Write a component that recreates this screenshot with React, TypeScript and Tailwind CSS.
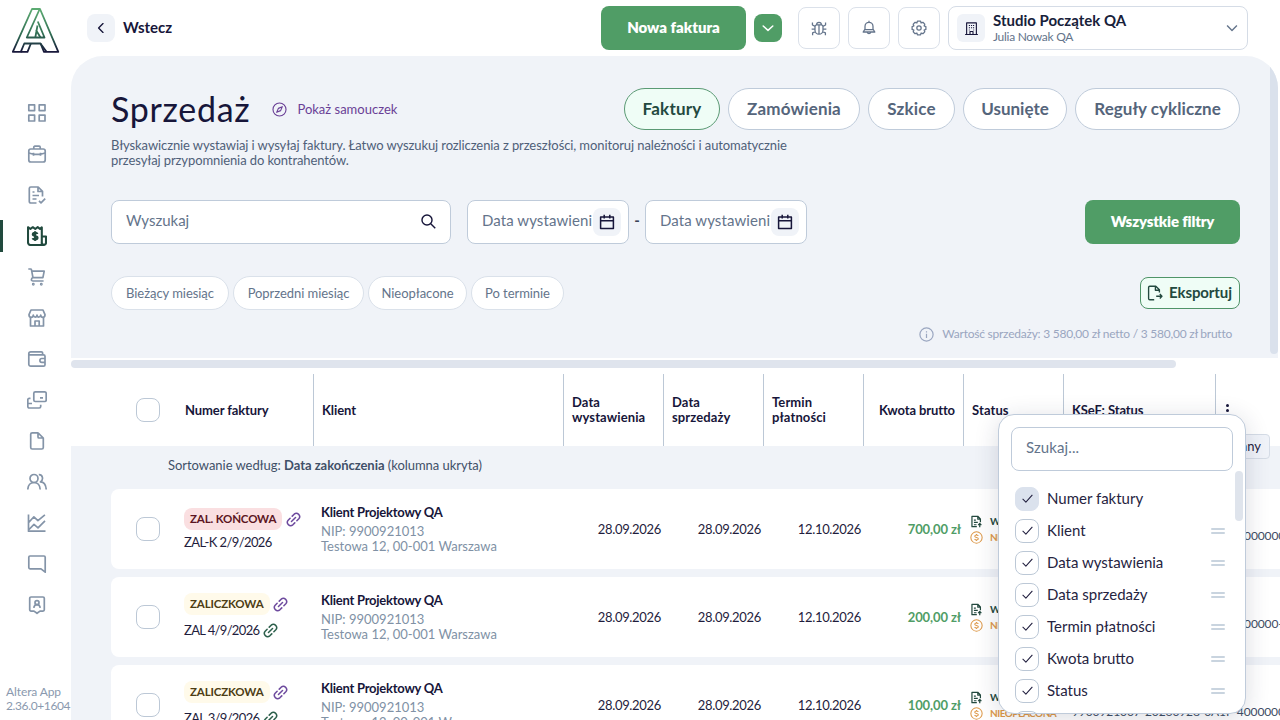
import type { ReactNode } from "react";

const navIcons: { id: string; active?: boolean; icon: ReactNode }[] = [
  {
    id: "dashboard",
    icon: <path d="M1.8 1.8h5.8v5.8H1.8zM12.2 1.8H18v5.8h-5.8zM1.8 12.2h5.8V18H1.8zM12.2 12.2H18V18h-5.8z" />,
  },
  {
    id: "company",
    icon: (
      <>
        <rect x="1.8" y="5" width="16.4" height="13" rx="2" />
        <path d="M6.8 5V3.2a1 1 0 0 1 1-1h4.4a1 1 0 0 1 1 1V5M1.8 9l4.7 1.3h7L18.2 9M6.5 8.8v3M13.5 8.8v3" />
      </>
    ),
  },
  {
    id: "documents",
    icon: (
      <>
        <path d="M9.5 18H3.8a1.5 1.5 0 0 1-1.5-1.5v-13A1.5 1.5 0 0 1 3.8 2h7.4l4.3 4.3v5.2M11 2v4.5h4.5M5.5 7h2M5.5 10.5h6.5M5.5 14h4" />
        <path d="m12 15.8 2 2 4.2-4.2" />
      </>
    ),
  },
  {
    id: "sales",
    active: true,
    icon: (
      <>
        <path d="M1 1.2 3.4 3l2.4-1.8L8.3 3l2.4-1.8L13 3l1.8-1.6V17a2 2 0 0 0 2 2H3.5A2.5 2.5 0 0 1 1 16.5z" />
        <path d="M14.8 10.5H19v6.2a2.1 2.1 0 0 1-4.2 0" />
        <path d="M10.4 8c-.2-.8-1-1.3-2.3-1.3-1.4 0-2.3.6-2.3 1.6 0 2.4 4.7 1 4.7 3.5 0 1-1 1.7-2.4 1.7-1.3 0-2.2-.5-2.5-1.4M8.1 5.2V15" />
      </>
    ),
  },
  {
    id: "purchases",
    icon: (
      <>
        <path d="M1.3 2h2.2a1 1 0 0 1 1 .8L6 10.8M5 4.2h12.2l-1.3 6.5H6c-1.8.3-2.4 3.3 0 3.3h10.6" />
        <circle cx="6.3" cy="17.2" r=".6" />
        <circle cx="14.3" cy="17.2" r=".6" />
      </>
    ),
  },
  {
    id: "shop",
    icon: (
      <path d="M3.5 9.5V18h13V9.5M8 18v-5h4.2v5M4 2h12l2 4.7c0 3.4-4 3.4-4.3.4-.4 2.7-3.4 2.7-3.7 0-.3 2.7-3.3 2.7-3.7 0C6 10.1 2 10.1 2 6.7z" />
    ),
  },
  {
    id: "wallet",
    icon: (
      <>
        <path d="M15.6 5.8V4a1.2 1.2 0 0 0-1.2-1.2H3.8a2 2 0 0 0-2 2v10.4a2 2 0 0 0 2 2h12.7a1.5 1.5 0 0 0 1.5-1.5V7.3a1.5 1.5 0 0 0-1.5-1.5H2.2" />
        <path d="M18 9.5h-3.2a1.9 1.9 0 0 0 0 3.8H18" />
      </>
    ),
  },
  {
    id: "payments",
    icon: (
      <>
        <rect x="6.8" y="1.8" width="12.4" height="9.7" rx="1.5" />
        <path d="M13 7.8h3M3.5 8.3H2.3A1.5 1.5 0 0 0 .8 9.800v6.7A1.5 1.5 0 0 0 2.3 18h9.9a1.5 1.5 0 0 0 1.5-1.5v-1.8M.8 13.5H5" />
      </>
    ),
  },
  {
    id: "files",
    icon: <path d="M11 1.8H5.2a1.5 1.5 0 0 0-1.5 1.5v13.2A1.5 1.5 0 0 0 5.2 18h9.6a1.5 1.5 0 0 0 1.5-1.5V7L11 1.8V6a1 1 0 0 0 1 1h4.3" />,
  },
  {
    id: "contacts",
    icon: (
      <>
        <circle cx="7" cy="6.5" r="4" />
        <path d="M.8 17.5c.2-4.2 2.700-7 6.200-7s6 2.8 6.200 7M11.8 2.6c3.7-.2 5.2 4.8 1.7 7.3 3.2 0 5.4 3 5.7 7.6" />
      </>
    ),
  },
  {
    id: "reports",
    icon: <path d="M1.5 1.5v16.7h17M1.7 9.5l5.2-5.7 4 3.8 7-5.8M2 16.5l5-5.2 4 3.5 7-7" />,
  },
  {
    id: "messages",
    icon: <path d="M3 2h14a1.2 1.2 0 0 1 1.2 1.2v15L14 14.8H3a1.2 1.2 0 0 1-1.2-1.2V3.2A1.2 1.2 0 0 1 3 2z" />,
  },
  {
    id: "support",
    icon: (
      <>
        <path d="M4 2h12a1.3 1.3 0 0 1 1.3 1.3v11.5A1.3 1.3 0 0 1 16 16.1h-3L10 18.3l-3-2.2H4a1.3 1.3 0 0 1-1.3-1.3V3.3A1.3 1.3 0 0 1 4 2z" />
        <circle cx="10" cy="7.7" r="2" />
        <path d="M6.8 12.8c.3-2 1.5-3.1 3.2-3.1s2.9 1.1 3.2 3.1" />
      </>
    ),
  },
];

const tabs = [
  { label: "Faktury", cls: "w-24 bg-[#effdf6] border-[#5a9a74] text-[#23493f] tracking-[0.2px]" },
  { label: "Zamówienia", cls: "w-[132px] bg-white border-[#bfcbda] text-[#55657b] tracking-[0.15px]" },
  { label: "Szkice", cls: "w-[87px] bg-white border-[#bfcbda] text-[#55657b] tracking-[0.15px]" },
  { label: "Usunięte", cls: "w-[104px] bg-white border-[#bfcbda] text-[#55657b]" },
  { label: "Reguły cykliczne", cls: "w-[165px] bg-white border-[#bfcbda] text-[#55657b] tracking-[0.05px]" },
];

const quickFilters = [
  { label: "Bieżący miesiąc", width: "w-[118px]" },
  { label: "Poprzedni miesiąc", width: "w-[131px]" },
  { label: "Nieopłacone", width: "w-[99px]" },
  { label: "Po terminie", width: "w-[93px]" },
];

const invoices = [
  { kind: "ZAL. KOŃCOWA", final: true, number: "ZAL-K 2/9/2026", amount: "700,00 zł", ksef: "9900921007-20260928-0A12-0000000" },
  { kind: "ZALICZKOWA", final: false, number: "ZAL 4/9/2026", amount: "200,00 zł", ksef: "9900921007-20260928-0A12-000000-" },
  { kind: "ZALICZKOWA", final: false, number: "ZAL 3/9/2026", amount: "100,00 zł", ksef: "9900921007-20260928-0A1F-4000000" },
];

const columns = ["Numer faktury", "Klient", "Data wystawienia", "Data sprzedaży", "Termin płatności", "Kwota brutto", "Status", "KSeF: Status"];

const Svg = ({ size = 20, sw = 1.5, className = "", children }: { size?: number; sw?: number; className?: string; children: ReactNode }) => (
  <svg width={size} height={size} viewBox="0 0 20 20" fill="none" stroke="currentColor" strokeWidth={sw} strokeLinejoin="round" className={`shrink-0 ${className}`}>
    {children}
  </svg>
);

const LinkIcon = ({ className = "" }) => (
  <Svg size={15} sw={2} className={className}>
    <path d="m7.3 12.700 5.400-5.400M8.3 5.5l2.6-2.6a4.4 4.4 0 0 1 6.2 6.2l-2.6 2.6M5.5 8.3l-2.6 2.6a4.4 4.4 0 0 0 6.2 6.2l2.6-2.6" strokeLinecap="round" />
  </Svg>
);

const CalendarButton = () => (
  <span className="flex size-7 items-center justify-center rounded-lg bg-[#f0f3f8]">
    <Svg size={16} sw={1.9} className="text-[#17163a]">
      <path d="M2 3.8h16v14.4H2zM2 8.5h16M6.5 1v4.5M13.5 1v4.5" />
    </Svg>
  </span>
);

const DateInput = () => (
  <div className="flex h-11 w-[162px] items-center rounded-lg border border-[#bfcbda] bg-white pl-3.5">
    <span className="-mt-[3px] w-[111px] overflow-hidden whitespace-nowrap text-[15px] tracking-[0.08px] text-[#64748b]">Data wystawieni</span>
    <CalendarButton />
  </div>
);

const Box = ({ className = "" }) => <span className={`size-6 shrink-0 rounded-lg border border-[#bcc8d6] ${className}`} />;

const Sidebar = () => (
  <aside className="flex h-[720px] w-[71px] shrink-0 flex-col bg-white">
    <svg width="71" height="60" viewBox="0 0 71 60" fill="none" stroke="url(#logo)" strokeWidth="1.8" strokeLinejoin="round">
      <defs>
        <linearGradient id="logo" x1="0" y1="9" x2="0" y2="52" gradientUnits="userSpaceOnUse">
          <stop offset="0" stopColor="#5cab72" />
          <stop offset=".6" stopColor="#2f6b52" />
          <stop offset="1" stopColor="#17163a" />
        </linearGradient>
      </defs>
      <path d="M12.8 51.8 32 9h8l18.3 42.8H44l-3.5-8.3H24.3L20.8 51.8z" />
      <path d="M39.5 9.5 26.8 37.5h17.7L37.8 21.500M20.8 51.8h6.7l3.4-8.3" />
      <path d="m37.5 25.500-2.200 12M36 30l4.500 7.500M40.5 43.5l6 8.300" />
    </svg>
    <nav className="mt-8 flex flex-col">
      {navIcons.map((n) => (
        <div key={n.id} className={`flex h-[41px] items-center ${n.active ? "text-[#214a3e]" : "text-[#8494a8]"}`}>
          <span className={`h-8 w-[3px] ${n.active ? "bg-[#214a3e]" : ""}`} />
          <Svg className="ml-6" sw={n.active ? 2.1 : 1.7}>{n.icon}</Svg>
        </div>
      ))}
    </nav>
    <div className="mt-auto pb-[7px] pl-1.5 text-[12px] leading-[14px] text-[#8a99ae]">
      <p className="tracking-[-0.1px]">Altera App</p>
      <p className="tracking-[-0.38px]">2.36.0+1604</p>
    </div>
  </aside>
);

const TopBar = () => (
  <header className="flex h-14 items-center pr-8 pl-4">
    <span className="flex size-7 items-center justify-center rounded-lg bg-[#f0f3f8] text-[#17163a]">
      <Svg size={16} sw={1.7}><path d="m12.5 4.5-5.5 5.5 5.5 5.5" strokeLinecap="round" /></Svg>
    </span>
    <span className="-mt-px ml-2 text-[15px] font-bold text-[#17163a]">Wstecz</span>
    <button className="ml-auto h-11 w-[145px] rounded-lg bg-[#509d66] pb-0.5 text-[15px] font-extrabold text-white">Nowa faktura</button>
    <button className="ml-2 flex size-7 items-center justify-center rounded-lg bg-[#509d66] text-white">
      <Svg size={16} sw={1.9}><path d="m4 7.5 6 5.5 6-5.5" strokeLinecap="round" /></Svg>
    </button>
    <div className="ml-4 flex gap-2 text-[#64748b]">
      <span className="flex size-[42px] items-center justify-center rounded-lg border border-[#dbe1ea]">
        <Svg size={16} sw={1.6}>
          <path d="M5 8.5C5 6.800 6 6 7.5 6h5c1.5 0 2.5.8 2.5 2.5v4.2a5 5 0 0 1-10 0zM10 6v11.5M7 6a3 3 0 0 1 6 0M5 11.500H.8M15 11.5h4.2M5.2 8 1.8 6.2V3M14.8 8l3.4-1.8V3M5.5 14.5 2 16v3M14.5 14.5 18 16v3" />
        </Svg>
      </span>
      <span className="flex size-[42px] items-center justify-center rounded-lg border border-[#dbe1ea]">
        <Svg size={16} sw={1.6}>
          <path d="M10 1v2M5 8a5 5 0 0 1 10 0v3.5l2.3 3.5H2.7L5 11.5zM4.5 12h11M7.8 15.5a2.3 2.3 0 0 0 4.4 0" />
        </Svg>
      </span>
      <span className="flex size-[42px] items-center justify-center rounded-lg border border-[#dbe1ea]">
        <Svg size={16} sw={1.6}>
          <circle cx="10" cy="10" r="2.7" />
          <path d="M8 1.5h4l.6 2.2 2.3-.8 2.3 2.3-.8 2.2 2.2.8v3.6l-2.2.8.8 2.2-2.3 2.3-2.3-.8-.6 2.2H8l-.6-2.2-2.3.8-2.3-2.3.8-2.2-2.2-.8V8.2l2.2-.8-.8-2.2 2.3-2.3 2.3.8z" />
        </Svg>
      </span>
    </div>
    <div className="ml-2 flex h-11 w-[300px] items-center rounded-lg border border-[#d5dce6] pr-2 pl-2">
      <span className="flex size-7 items-center justify-center rounded-md bg-[#f0f3f8] text-[#17163a]">
        <Svg size={15}>
          <path d="M3.5 18V2.500h13V18M1.5 18h17M8 18v-4h4v4M6.5 6H8M9.3 6h1.5M12 6h1.5M6.5 9H8M9.3 9h1.5M12 9h1.5M6.5 12h1M12.5 12h1" />
        </Svg>
      </span>
      <div className="ml-2 leading-4">
        <p className="text-[15px] font-bold text-[#17213a]">Studio Początek QA</p>
        <p className="pt-px text-[12px] leading-[15px] tracking-[-0.28px] text-[#64748b]">Julia Nowak QA</p>
      </div>
      <Svg size={14} sw={2} className="ml-auto text-[#64748b]"><path d="m3 6.500 7 7 7-7" /></Svg>
    </div>
  </header>
);

const InvoiceRow = ({ inv }: { inv: (typeof invoices)[number] }) => (
  <div className="flex h-20 w-[1200px] shrink-0 items-center rounded-lg bg-white text-[13px] text-[#1f1d3d]">
    <Box className="ml-[25px]" />
    <div className={`ml-6 flex w-[137px] shrink-0 flex-col items-start ${inv.final ? "gap-1" : "gap-[7px] pb-[3px]"}`}>
      <div className={`flex items-center ${inv.final ? "gap-1" : "gap-[3px]"}`}>
        <span className={`flex h-[22px] items-center rounded-lg px-1.5 text-[11.5px] font-bold tracking-[-0.15px] ${inv.final ? "bg-[#fadfe1] text-[#5c1522]" : "bg-[#fffaea] text-[#4d3d14]"}`}>
          {inv.kind}
        </span>
        <LinkIcon className="text-[#6d4a9e]" />
      </div>
      <div className="flex items-center gap-1 leading-4">
        <span className={inv.final ? "tracking-[-0.6px]" : "tracking-[-0.65px]"}>{inv.number}</span>
        {!inv.final && <LinkIcon className="text-[#2c5f4b]" />}
      </div>
    </div>
    <div className="w-[242px] shrink-0 leading-[15px] text-[#8091a5]">
      <p className="mb-1 font-bold tracking-[-0.24px] text-[#17163a]">Klient Projektowy QA</p>
      <p>NIP: 9900921013</p>
      <p>Testowa 12, 00-001 Warszawa</p>
    </div>
    <span className="w-[98px] shrink-0 pt-0.5 text-right tracking-[-0.32px]">28.09.2026</span>
    <span className="w-[100px] shrink-0 pt-0.5 text-right tracking-[-0.32px]">28.09.2026</span>
    <span className="w-[100px] shrink-0 pt-0.5 text-right tracking-[-0.32px]">12.10.2026</span>
    <span className="w-[100px] shrink-0 pt-0.5 text-right font-bold tracking-[-0.1px] text-[#509d66]">{inv.amount}</span>
    <div className="ml-[9px] flex w-[102px] shrink-0 flex-col gap-0.5 text-[10px] leading-[14px] font-bold">
      <div className="flex items-center gap-[7px] text-[#23493f]">
        <Svg size={13} sw={1.9}>
          <path d="M10.5 18H3V2h9l4 4v5M12 2v4.500h4M6 8h3M6 11.5h6M6 15h4M15 19v-6M12.5 15.500 15 13l2.5 2.5" />
        </Svg>
        WYSŁANA
      </div>
      <div className="flex items-center gap-[7px] tracking-[-0.5px] text-[#dd9848]">
        <Svg size={13} sw={1.6}>
          <circle cx="10" cy="10" r="8.7" />
          <path d="M12.8 7.5c-.5-1-1.5-1.5-2.8-1.5-1.6 0-2.7.8-2.7 2 0 2.7 5.5 1.2 5.5 4 0 1.2-1.2 2-2.8 2-1.5 0-2.5-.6-2.9-1.6M10 4.500V6M10 14v1.5" />
        </Svg>
        NIEOPŁACONA
      </div>
    </div>
    <span className="mt-3.5 w-[220px] shrink-0 text-[12px] tracking-[-0.1px] whitespace-nowrap text-[#3d4d63]">{inv.ksef}</span>
  </div>
);

const ColumnPicker = () => (
  <div className="absolute top-[414px] left-[998px] z-20 h-[300px] w-[248px] overflow-hidden rounded-2xl border border-[#bfcbda] bg-white pt-3 pl-3 shadow-[0_4px_24px_rgba(30,40,70,0.16)]">
    <div className="flex h-11 w-[222px] items-center rounded-lg border border-[#bfcbda] pl-3.5 text-[15px] tracking-[0.1px] text-[#64748b]">
      <span className="-mt-[3px]">Szukaj...</span>
    </div>
    <div className="flex justify-between pr-0.5">
      <div className="flex flex-1 flex-col gap-2 pt-4 pl-1">
        {columns.map((c, i) => (
          <div key={c} className="flex h-6 items-center">
            <span className={`flex size-6 shrink-0 items-center justify-center rounded-lg border ${i === 0 ? "border-[#dbe2ed] bg-[#dbe2ed]" : "border-[#bcc8d6]"} text-[#1f1d3d]`}>
              <Svg size={13} sw={1.6} className="-mt-0.5"><path d="m2.5 10.5 5 5L17.5 4.500" /></Svg>
            </span>
            <span className="-mt-px ml-2 text-[15px] text-[#26243f]">{c}</span>
            {i > 0 && (
              <span className="mr-2.5 ml-auto flex h-1.5 w-3.5 flex-col justify-between">
                <span className="h-[2px] rounded bg-[#c9d4df]" />
                <span className="h-[2px] rounded bg-[#c9d4df]" />
              </span>
            )}
          </div>
        ))}
      </div>
      <span className="h-[50px] w-2 shrink-0 rounded bg-[#dfe4ec]" />
    </div>
  </div>
);

export default function App() {
  return (
    <div className="relative flex h-[720px] w-[1280px] overflow-hidden bg-white font-['Lato',sans-serif]">
      <Sidebar />
      <main className="flex w-[1209px] shrink-0 flex-col">
        <TopBar />

        {/* Page heading and filters */}
        <section className="flex h-[302px] w-[1207px] shrink-0 overflow-hidden rounded-t-[32px] bg-[#f0f3f8]">
          <div className="ml-10 flex w-[1129px] flex-col pt-8">
            <div className="flex h-[42px] items-center">
              <h1 className="-mt-0.5 text-[34px] tracking-[0.7px] text-[#17163a]">Sprzedaż</h1>
              <span className="ml-[22px] flex items-center gap-2.5 pt-px text-[13px] text-[#6a3f96]">
                <Svg size={15} sw={1.5}>
                  <circle cx="10" cy="10" r="8.7" />
                  <path d="m13.8 6.2-2.3 5.3-5.3 2.3 2.3-5.300z" />
                </Svg>
                Pokaż samouczek
              </span>
              <div className="ml-auto flex gap-2">
                {tabs.map((t) => (
                  <span key={t.label} className={`flex h-[42px] items-center justify-center rounded-full border text-[17px] font-bold whitespace-nowrap ${t.cls}`}>
                    {t.label}
                  </span>
                ))}
              </div>
            </div>
            <p className="mt-2 w-[690px] text-[13px] leading-[15px] tracking-[-0.1px] text-[#4f6079]">
              Błyskawicznie wystawiaj i wysyłaj faktury. Łatwo wyszukuj rozliczenia z przeszłości, monitoruj należności i automatycznie
              <br />
              przesyłaj przypomnienia do kontrahentów.
            </p>
            <div className="mt-8 flex items-center">
              <div className="flex h-11 w-[340px] items-center justify-between rounded-lg border border-[#bfcbda] bg-white pr-3.5 pl-3.5 text-[15px] text-[#64748b]">
                <span className="-mt-[3px]">Wyszukaj</span>
                <Svg size={15} sw={1.9} className="-mt-0.5 text-[#17163a]">
                  <circle cx="8" cy="8" r="6.7" />
                  <path d="m13 13 6 6" />
                </Svg>
              </div>
              <span className="w-4" />
              <DateInput />
              <span className="-mt-1 w-4 text-center text-[15px] font-bold text-[#3b4358]">-</span>
              <DateInput />
              <button className="ml-auto h-11 w-[155px] rounded-lg bg-[#509d66] pb-0.5 text-[15px] font-extrabold tracking-[-0.15px] text-white">Wszystkie filtry</button>
            </div>
            <div className="mt-8 flex h-[34px] items-center gap-1">
              {quickFilters.map((f) => (
                <span key={f.label} className={`flex h-[34px] items-center justify-center rounded-full border border-[#dae1ea] bg-white pt-px text-[13px] tracking-[-0.05px] text-[#64748b] ${f.width}`}>
                  {f.label}
                </span>
              ))}
              <button className="ml-auto flex h-8 w-[100px] items-center gap-1.5 rounded-lg border border-[#4f9468] bg-[#effdf6] pl-1.5 text-[15px] font-bold tracking-[-0.1px] text-[#23493f]">
                <Svg size={16} sw={1.7}>
                  <path d="M9 18.5H3.5A1.5 1.5 0 0 1 2 17V3a1.5 1.5 0 0 1 1.5-1.5H11L15.5 6v3.5M10.5 1.500V6.500h5M11.5 14h7M16 11.2l2.7 2.8-2.7 2.8" />
                </Svg>
                <span className="-mt-0.5">Eksportuj</span>
              </button>
            </div>
            <div className="mt-[15px] flex items-center justify-end gap-2 pr-2 text-[12px] tracking-[-0.24px] text-[#9aa6c0]">
              <Svg size={15} sw={1.6}>
                <circle cx="10" cy="10" r="8.8" />
                <path d="M10 9v5.5M10 5.5v1.8" />
              </Svg>
              Wartość sprzedaży: 3 580,00 zł netto / 3 580,00 zł brutto
            </div>
          </div>
          <span className="ml-auto h-[298px] w-2 rounded-b bg-[#dae1ec]" />
        </section>

        <div className="h-4 shrink-0 pt-0.5">
          <div className="h-2 w-[1105px] rounded bg-[#dfe4ed]" />
        </div>

        {/* Table header */}
        <div className="flex h-[72px] shrink-0 items-center text-[13px] leading-[15px] font-bold tracking-[-0.1px] text-[#17163a]">
          <div className="flex h-full w-[243px] items-center border-r border-[#bcc8d6] pl-[65px]">
            <Box />
            <span className="ml-[25px]">{columns[0]}</span>
          </div>
          <div className="flex h-full w-[250px] items-center border-r border-[#bcc8d6] pl-2">{columns[1]}</div>
          {columns.slice(2, 5).map((c) => (
            <div key={c} className="flex h-full w-[100px] items-center border-r border-[#bcc8d6] pr-4 pb-px pl-2 tracking-[0.1px]">{c}</div>
          ))}
          <div className="flex h-full w-[100px] items-center justify-end border-r border-[#bcc8d6] pr-2 tracking-[-0.1px]">{columns[5]}</div>
          <div className="flex h-full w-[100px] items-center border-r border-[#bcc8d6] pl-2 tracking-[0.1px]">{columns[6]}</div>
          <div className="flex h-full w-[152px] items-center border-r border-[#bcc8d6] pl-2">{columns[7]}</div>
          <span className="flex flex-col gap-[2px] pl-2.5">
            <i className="size-[3px] rounded-full bg-[#17163a]" />
            <i className="size-[3px] rounded-full bg-[#17163a]" />
            <i className="size-[3px] rounded-full bg-[#17163a]" />
          </span>
        </div>

        {/* Table body */}
        <div className="flex h-[274px] shrink-0 flex-col overflow-hidden bg-[#f0f3f8] pl-10">
          <p className="flex h-[43px] shrink-0 items-center pb-[3px] pl-[57px] text-[13px] tracking-[-0.04px] text-[#3f5068]">
            Sortowanie według:&nbsp;<b>Data zakończenia</b>&nbsp;(kolumna ukryta)
          </p>
          <div className="flex flex-col gap-2">
            {invoices.map((inv) => (
              <InvoiceRow key={inv.number} inv={inv} />
            ))}
          </div>
        </div>
      </main>

      <div className="absolute top-[434px] left-[1130px] z-10 flex h-[25px] w-[140px] items-center justify-end rounded border border-[#d5dce6] bg-[#f0f3f9] pr-2 text-[13px] whitespace-nowrap text-[#26243f]">
        Widok kolumny: inny
      </div>
      <ColumnPicker />
    </div>
  );
}
